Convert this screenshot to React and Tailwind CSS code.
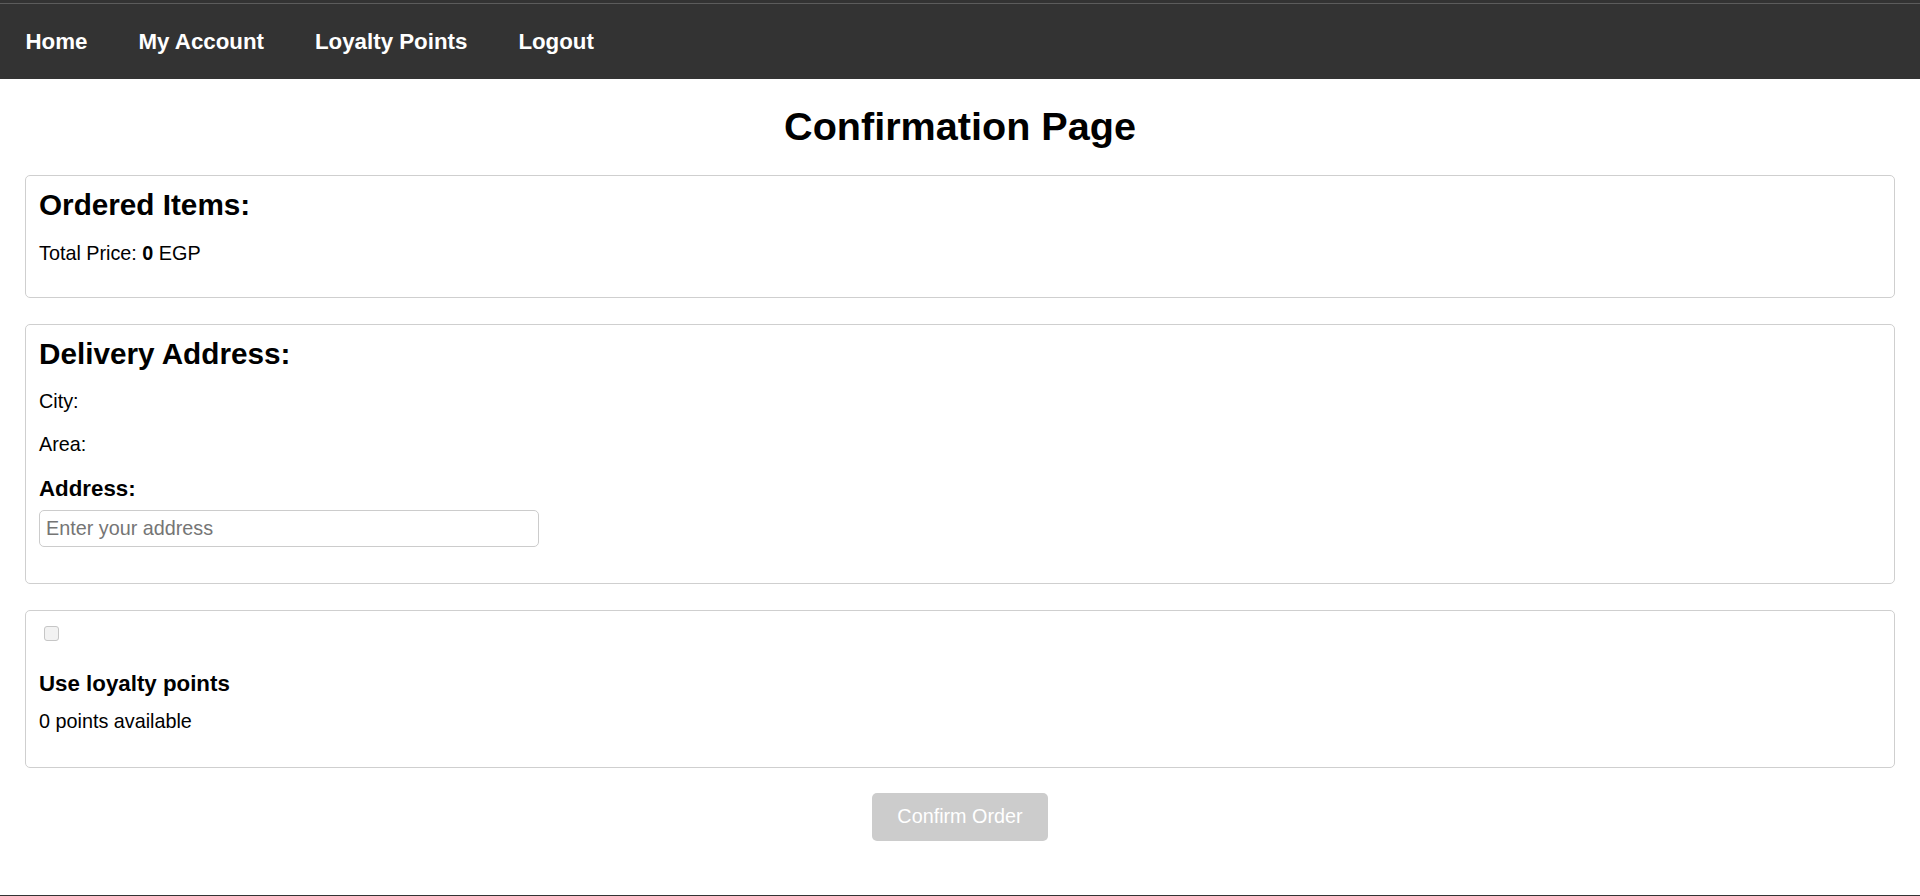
import { useState } from 'react'

function NavBar() {
    const links = ['Home', 'My Account', 'Loyalty Points', 'Logout']

    return (
        <nav className="h-[79px] bg-[#333333] flex flex-col">
            <div className="h-[3px]" />
            <div className="h-px bg-[#5c5c5c]" />
            <div className="flex-1 flex items-center">
                {links.map(link => (
                    <a
                        key={link}
                        href="#"
                        className="px-[25.5px] text-[22.3px] leading-[26px] font-bold text-white no-underline"
                    >
                        {link}
                    </a>
                ))}
            </div>
        </nav>
    )
}

function Card({ children, className = '' }) {
    return (
        <section className={`mx-[25px] border border-[#cfcfcf] rounded-[5px] px-[13px] ${className}`}>
            {children}
        </section>
    )
}

export default function App() {
    const [address, setAddress] = useState('')
    const [useLoyalty, setUseLoyalty] = useState(false)

    return (
        <div className="min-h-screen flex flex-col bg-white text-black font-['Liberation_Sans',Arial,sans-serif]">
            <NavBar />

            <h1 className="mt-[24px] text-center text-[39.6px] leading-[46px] font-bold">
                Confirmation Page
            </h1>

            {/* Ordered items */}
            <Card className="mt-[26px] pt-[12px] pb-[32px]">
                <h2 className="text-[29.7px] leading-[34px] font-bold">Ordered Items:</h2>
                <p className="mt-[19.5px] text-[19.8px] leading-[23px]">
                    Total Price: <strong>0</strong> EGP
                </p>
            </Card>

            {/* Delivery address */}
            <Card className="mt-[26px] pt-[12px] pb-[36px]">
                <h2 className="text-[29.7px] leading-[34px] font-bold">Delivery Address:</h2>
                <p className="mt-[19.5px] text-[19.8px] leading-[23px]">City: </p>
                <p className="mt-[19.5px] text-[19.8px] leading-[23px]">Area: </p>
                <label htmlFor="address" className="block mt-[20px] text-[22.3px] leading-[26px] font-bold">
                    Address:
                </label>
                <input
                    id="address"
                    type="text"
                    value={address}
                    onChange={e => setAddress(e.target.value)}
                    placeholder="Enter your address"
                    className="block mt-[8px] w-[500px] h-[37px] px-[6px] border border-[#cccccc] rounded-[5px] text-[19.8px] placeholder:text-[#757575] outline-none"
                />
            </Card>

            {/* Loyalty points */}
            <Card className="mt-[26px] pt-[12px] pb-[34px]">
                <input
                    type="checkbox"
                    checked={useLoyalty}
                    onChange={e => setUseLoyalty(e.target.checked)}
                    disabled
                    className="block appearance-none mt-[3px] ml-[5px] w-[15px] h-[15px] border border-[#c6c6c6] rounded-[3px] bg-[#f2f2f2]"
                />
                <h3 className="mt-[30px] text-[22.3px] leading-[26px] font-bold">Use loyalty points</h3>
                <p className="mt-[13px] text-[19.8px] leading-[23px]">0 points available</p>
            </Card>

            <div className="mt-[25px] flex justify-center">
                <button
                    type="button"
                    disabled
                    className="w-[176px] h-[48px] rounded-[5px] bg-[#cccccc] text-white text-[19.8px]"
                >
                    Confirm Order
                </button>
            </div>

            <div className="flex-1" />
            <div className="h-px bg-[#333333]" />
        </div>
    )
}
